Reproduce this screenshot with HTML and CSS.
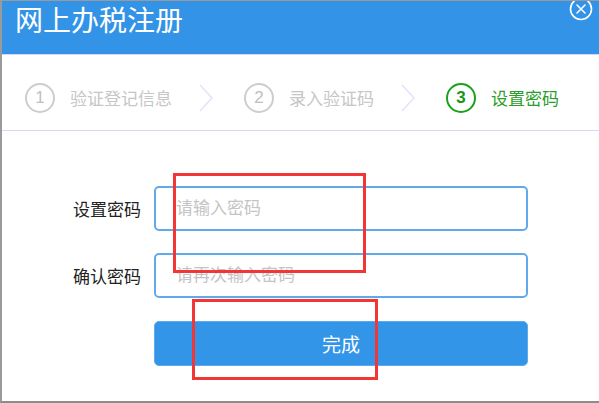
FILE: index.html
```html
<!DOCTYPE html>
<html lang="zh-CN">
<head>
    <meta charset="UTF-8">
    <title>网上办税注册</title>
    <link rel="stylesheet" href="styles.css">
</head>
<body>
<div class="dialog">
    <div class="dlg-head">
        <span class="dlg-title">网上办税注册</span>
        <svg class="dlg-close" width="24" height="24" viewBox="0 0 24 24">
            <circle cx="12" cy="12" r="10.5" fill="none" stroke="#fff" stroke-width="1.6"/>
            <path d="M8 8 L16 16 M16 8 L8 16" stroke="#fff" stroke-width="1.6" stroke-linecap="round"/>
        </svg>
    </div>
    <div class="steps">
        <div class="step">
            <span class="step-num">1</span>
            <span class="step-txt">验证登记信息</span>
        </div>
        <svg class="step-arrow" width="14" height="28" viewBox="0 0 14 28">
            <polyline points="1,1 13,14 1,27" fill="none" stroke="#e2e2fb" stroke-width="1.5"/>
        </svg>
        <div class="step">
            <span class="step-num">2</span>
            <span class="step-txt">录入验证码</span>
        </div>
        <svg class="step-arrow" width="14" height="28" viewBox="0 0 14 28">
            <polyline points="1,1 13,14 1,27" fill="none" stroke="#e2e2fb" stroke-width="1.5"/>
        </svg>
        <div class="step step-on">
            <span class="step-num">3</span>
            <span class="step-txt">设置密码</span>
        </div>
    </div>
    <form class="pwd-form">
        <div class="row">
            <label for="pwd1">设置密码</label>
            <input type="password" id="pwd1" placeholder="请输入密码">
        </div>
        <div class="row">
            <label for="pwd2">确认密码</label>
            <input type="password" id="pwd2" placeholder="请再次输入密码">
        </div>
        <div class="row">
            <span class="lbl-blank"></span>
            <button type="button" class="btn-done">完成</button>
        </div>
    </form>
    <!-- 标注框 -->
    <div class="mark mark-a"></div>
    <div class="mark mark-b"></div>
</div>
</body>
</html>
```

FILE: styles.css
```css
*{
    box-sizing: border-box;
}
body{
    margin: 0;
    font-family: "Liberation Sans", "Noto Sans CJK SC", sans-serif;
    background: #fff;
}
.dialog{
    position: relative;
    width: 599px;
    height: 403px;
    border-top: 1px solid #9a9a9a;
    border-left: 2px solid #9a9a9a;
    border-bottom: 2px solid #8c8c8c;
    overflow: hidden;
}
.dlg-head{
    display: flex;
    justify-content: space-between;
    height: 53px;
    background-color: #3393e6;
    padding-left: 13px;
    padding-right: 6px;
}
.dlg-title{
    color: #fff;
    font-size: 28px;
    line-height: 42px;
}
.dlg-close{
    margin-top: -4px;
}
.steps{
    display: flex;
    align-items: center;
    height: 77px;
    padding-left: 23px;
    padding-top: 10px;
    border-top: 1px solid #d6d6f6;
    border-bottom: 1px solid #d6d6f6;
}
.step{
    display: flex;
    align-items: center;
    color: #c6c6c6;
}
.step-num{
    display: flex;
    align-items: center;
    justify-content: center;
    width: 30px;
    height: 30px;
    border: 2px solid #cdcdcd;
    border-radius: 50%;
    font-size: 17px;
    color: #c0c0c0;
}
.step-txt{
    margin-left: 15px;
    font-size: 17px;
}
.step-arrow{
    margin-left: 27px;
    margin-right: 31px;
}
.step-on{
    color: #2a9d2a;
}
.step-on .step-num{
    border-color: #1aa01a;
    color: #1a951a;
    font-weight: bold;
}
.pwd-form{
    display: flex;
    flex-direction: column;
    gap: 22px;
    padding-top: 55px;
}
.row{
    display: flex;
    align-items: center;
}
.row label, .lbl-blank{
    width: 139px;
    margin-right: 13px;
    text-align: right;
    font-size: 17px;
    color: #222;
}
.row input{
    width: 374px;
    height: 45px;
    border: 2px solid #62a8ec;
    border-radius: 5px;
    padding-left: 20px;
    font-size: 17px;
    font-family: inherit;
    outline: none;
}
.row input::placeholder{
    color: #c4c4c4;
}
.btn-done{
    width: 374px;
    height: 45px;
    margin-top: 1px;
    background-color: #3395e8;
    border: 1px solid #5aaaf0;
    border-radius: 5px;
    color: #fff;
    font-size: 19px;
    font-family: inherit;
    cursor: pointer;
}
.mark{
    position: absolute;
    border: 3px solid #f23535;
}
.mark-a{
    left: 171px;
    top: 172px;
    width: 193px;
    height: 100px;
}
.mark-b{
    left: 190px;
    top: 298px;
    width: 186px;
    height: 81px;
}
```
